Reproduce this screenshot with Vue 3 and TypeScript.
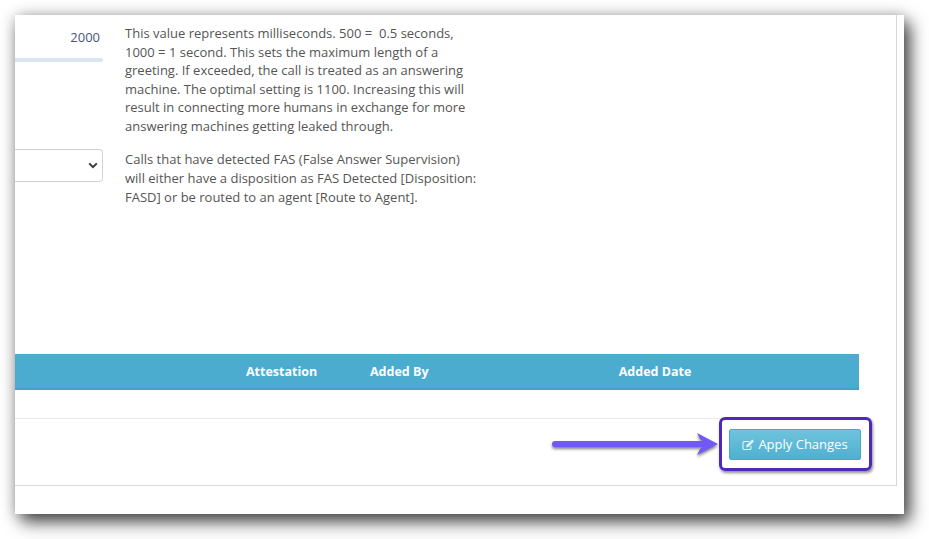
<script setup lang="ts">
const columns: { label: string; width: number }[] = [
  { label: 'Attestation', width: 124 },
  { label: 'Added By', width: 129 },
  { label: 'Added Date', width: 322 },
]
</script>

<template>
  <div class="page">
    <div class="window">
      <div class="panel">
        <div class="settings">
          <div class="controls">
            <div class="value">2000</div>
            <div class="slider"></div>
            <div class="select">
              <svg class="chevron" width="10" height="7" viewBox="0 0 10 7">
                <path d="M1.2 1.4 5 5.2l3.8-3.8" fill="none" stroke="#343a40" stroke-width="2" />
              </svg>
            </div>
          </div>
          <div class="help">
            <p>This value represents milliseconds. 500 = &nbsp;0.5 seconds, 1000 = 1 second. This sets the maximum length of a greeting. If exceeded, the call is treated as an answering machine. The optimal setting is 1100. Increasing this will result in connecting more humans in exchange for more answering machines getting leaked through.</p>
            <p>Calls that have detected FAS (False Answer Supervision) will either have a disposition as FAS Detected [Disposition: FASD] or be routed to an agent [Route to Agent].</p>
          </div>
        </div>
        <div class="thead">
          <span v-for="c in columns" :key="c.label" class="th" :style="{ width: c.width + 'px' }">{{ c.label }}</span>
        </div>
        <div class="tbody"></div>
        <div class="footer">
          <button class="apply" type="button">
            <svg class="edit" width="13" height="12" viewBox="0 0 13 12">
              <path d="M9 6.800v2.400A1.300 1.300 0 0 1 7.700 10.500H2.300A1.300 1.300 0 0 1 1 9.200V3.800a1.300 1.300 0 0 1 1.300-1.300h5" fill="none" stroke="#e4f3f8" stroke-width="1.100" />
              <path d="M4.500 6.200 10.300.6l1.700 1.700-5.700 5.600-2.200.4z" fill="#e4f3f8" />
            </svg>
            <span class="apply-label">Apply Changes</span>
          </button>
        </div>
      </div>
      <div class="highlight"></div>
      <svg class="arrow" width="172" height="30" viewBox="0 0 172 30">
        <path d="M5 15H160" stroke="#7059f6" stroke-width="6" stroke-linecap="round" fill="none" />
        <path d="M147 4 168 15 147 26l3-6 7-5-7-5z" fill="#7059f6" />
      </svg>
    </div>
  </div>
</template>

<style>
html, body { margin: 0; background: #fff; }
</style>

<style scoped>
.page {
  width: 929px;
  height: 539px;
  padding: 15px 25px 25px 15px;
  box-sizing: border-box;
  background: #fff;
  overflow: hidden;
  font-family: "Open Sans", "Liberation Sans", sans-serif;
}
.window {
  position: relative;
  width: 889px;
  height: 499px;
  background: #fff;
  box-shadow: 6px 8px 16px rgba(0, 0, 0, 0.7), 0 0 14px rgba(0, 0, 0, 0.22);
}
.panel {
  width: 882px;
  height: 471px;
  box-sizing: border-box;
  border-right: 1px solid #d8d8d8;
  border-bottom: 1px solid #d8d8d8;
  display: flex;
  flex-direction: column;
}
.settings {
  height: 339px;
  display: flex;
  box-sizing: border-box;
  padding-top: 9px;
}
.controls {
  width: 88px;
  flex: none;
}
.value {
  text-align: right;
  padding-right: 3px;
  font-size: 13px;
  line-height: 18px;
  margin-top: 4px;
  color: #46567c;
}
.slider {
  height: 4px;
  margin-top: 12px;
  background: #dbe4f5;
  border-radius: 0 2px 2px 0;
}
.select {
  height: 33px;
  margin-top: 87px;
  box-sizing: border-box;
  border: 1px solid #ced4da;
  border-left: none;
  border-radius: 0 4px 4px 0;
  display: flex;
  align-items: center;
  justify-content: flex-end;
  padding-right: 4px;
}
.help {
  width: 353px;
  margin-left: 22px;
  font-size: 13px;
  line-height: 18.570px;
  color: #555;
}
.help p {
  margin: 0 0 15px;
}
.thead {
  width: 844px;
  height: 36px;
  box-sizing: border-box;
  background: #4bacd0;
  border-bottom: 2px solid #42a3c5;
  display: flex;
  align-items: center;
  padding-left: 231px;
  color: #fff;
  font-size: 12.500px;
  font-weight: 700;
}
.th {
  flex: none;
}
.th:last-child {
  text-align: center;
  padding-right: 10px;
  box-sizing: border-box;
}
.tbody {
  width: 844px;
  height: 28px;
  border-bottom: 1px solid #e9e9e9;
}
.footer {
  display: flex;
  justify-content: flex-end;
  padding: 10px 35px 0 0;
}
.apply {
  width: 132px;
  height: 31px;
  border: 1px solid #4aa9c9;
  border-radius: 2px;
  background: linear-gradient(#6fc3dc, #4fb0d0);
  color: #fff;
  font-family: inherit;
  font-size: 13px;
  display: flex;
  align-items: center;
  justify-content: center;
  gap: 3px;
  padding: 0;
}
.apply-label {
  margin-top: -1px;
}
.highlight {
  position: absolute;
  left: 704px;
  top: 402px;
  width: 153px;
  height: 54px;
  box-sizing: border-box;
  border: 3.500px solid #4f29b8;
  border-radius: 6px;
  box-shadow: 1px 2px 3px rgba(0, 0, 0, 0.45);
}
.arrow {
  position: absolute;
  left: 535px;
  top: 414px;
  filter: drop-shadow(0 2px 1.500px rgba(0, 0, 0, 0.5));
}
</style>
